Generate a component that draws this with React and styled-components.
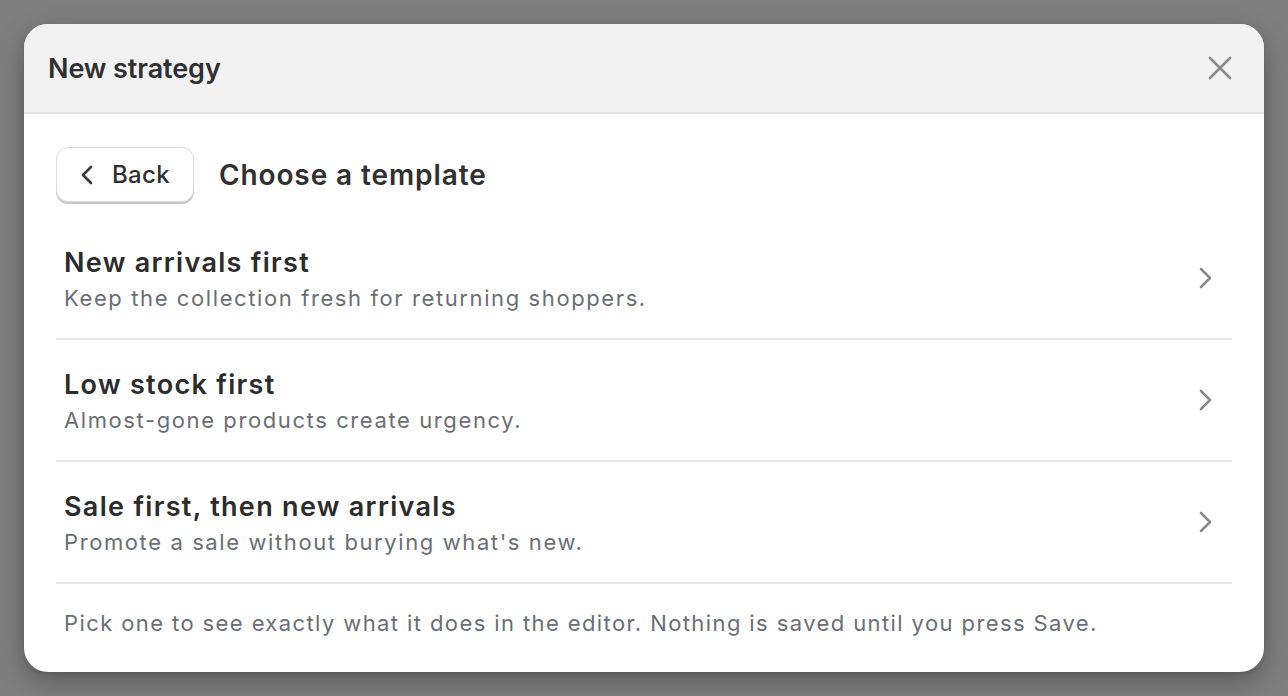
import React from 'react';
import styled, { createGlobalStyle } from 'styled-components';

const GlobalStyle = createGlobalStyle`
  html, body {
    margin: 0;
    padding: 0;
    background: #7f7f7f;
    font-family: 'Inter', 'Noto Sans', sans-serif;
    -webkit-font-smoothing: antialiased;
  }
  * { box-sizing: border-box; }
`;

const Overlay = styled.div`
  min-height: 100vh;
  padding: 24px;
  display: flex;
  align-items: flex-start;
  justify-content: center;
`;

const Modal = styled.div`
  width: 100%;
  background: #ffffff;
  border-radius: 24px;
  overflow: hidden;
  box-shadow: 0 10px 28px rgba(0, 0, 0, 0.28), 0 2px 6px rgba(0, 0, 0, 0.12);
`;

const Header = styled.div`
  height: 90px;
  background: #f2f2f2;
  border-bottom: 2px solid #e3e3e3;
  display: flex;
  align-items: center;
  justify-content: space-between;
  padding: 0 32px 0 24px;
`;

const Title = styled.h2`
  margin: 0;
  font-size: 27px;
  font-weight: 600;
  color: #303030;
  letter-spacing: -0.1px;
`;

const IconButton = styled.button`
  border: none;
  background: transparent;
  padding: 0;
  display: flex;
  align-items: center;
  justify-content: center;
  cursor: pointer;
  color: #8a8a8a;
`;

const Body = styled.div`
  padding: 33px 32px 0;
`;

const TopRow = styled.div`
  display: flex;
  align-items: center;
  gap: 25px;
`;

const BackButton = styled.button`
  height: 55px;
  display: flex;
  align-items: center;
  gap: 19px;
  padding: 0 23px 0 24px;
  background: #ffffff;
  border: 1px solid #dcdcdc;
  border-radius: 12px;
  box-shadow: 0 2px 0 #c8c8c8;
  font-family: inherit;
  font-size: 24px;
  font-weight: 500;
  color: #303030;
  letter-spacing: 0.3px;
  cursor: pointer;
`;

const Heading = styled.h3`
  margin: 0;
  font-size: 28px;
  font-weight: 600;
  color: #303030;
  letter-spacing: 0.9px;
`;

const List = styled.div`
  margin-top: 16px;
  display: flex;
  flex-direction: column;
`;

const Row = styled.div`
  display: flex;
  align-items: center;
  justify-content: space-between;
  padding: 25px 20px 25px 8px;
  border-bottom: 2px solid #e6e6e6;
  cursor: pointer;
`;

const RowText = styled.div`
  display: flex;
  flex-direction: column;
`;

const RowTitle = styled.div`
  font-size: 27px;
  line-height: 40px;
  font-weight: 600;
  color: #2c2c2c;
  letter-spacing: 1.3px;
`;

const RowDesc = styled.div`
  font-size: 22px;
  line-height: 30px;
  color: #6b6e74;
  letter-spacing: 1.6px;
`;

const Note = styled.p`
  margin: 0;
  padding: 24px 8px 34px;
  font-size: 22px;
  line-height: 30px;
  color: #6b6e74;
  letter-spacing: 1.4px;
`;

const CloseIcon = () => (
  <svg width="24" height="24" viewBox="0 0 24 24" fill="none" stroke="currentColor" strokeWidth="2.6" strokeLinecap="round">
    <path d="M2 2 L22 22 M22 2 L2 22" />
  </svg>
);

const ChevronLeft = () => (
  <svg width="12" height="20" viewBox="0 0 12 20" fill="none" stroke="#3a3a3a" strokeWidth="2.6" strokeLinecap="round" strokeLinejoin="round">
    <path d="M10 2 L2 10 L10 18" />
  </svg>
);

const ChevronRight = () => (
  <svg width="14" height="22" viewBox="0 0 14 22" fill="none" stroke="#8a8a8a" strokeWidth="2.6" strokeLinecap="round" strokeLinejoin="round">
    <path d="M3 2 L12 11 L3 20" />
  </svg>
);

const templates = [
  { title: 'New arrivals first', desc: 'Keep the collection fresh for returning shoppers.' },
  { title: 'Low stock first', desc: 'Almost-gone products create urgency.' },
  { title: 'Sale first, then new arrivals', desc: "Promote a sale without burying what's new." },
];

const App = () => {
  return (
    <>
      <GlobalStyle />
      <Overlay>
        <Modal>
          <Header>
            <Title>New strategy</Title>
            <IconButton aria-label="Close">
              <CloseIcon />
            </IconButton>
          </Header>
          <Body>
            <TopRow>
              <BackButton>
                <ChevronLeft />
                Back
              </BackButton>
              <Heading>Choose a template</Heading>
            </TopRow>
            <List>
              {templates.map((t) => (
                <Row key={t.title}>
                  <RowText>
                    <RowTitle>{t.title}</RowTitle>
                    <RowDesc>{t.desc}</RowDesc>
                  </RowText>
                  <ChevronRight />
                </Row>
              ))}
            </List>
            <Note>
              Pick one to see exactly what it does in the editor. Nothing is saved until you press Save.
            </Note>
          </Body>
        </Modal>
      </Overlay>
    </>
  );
};

export default App;
